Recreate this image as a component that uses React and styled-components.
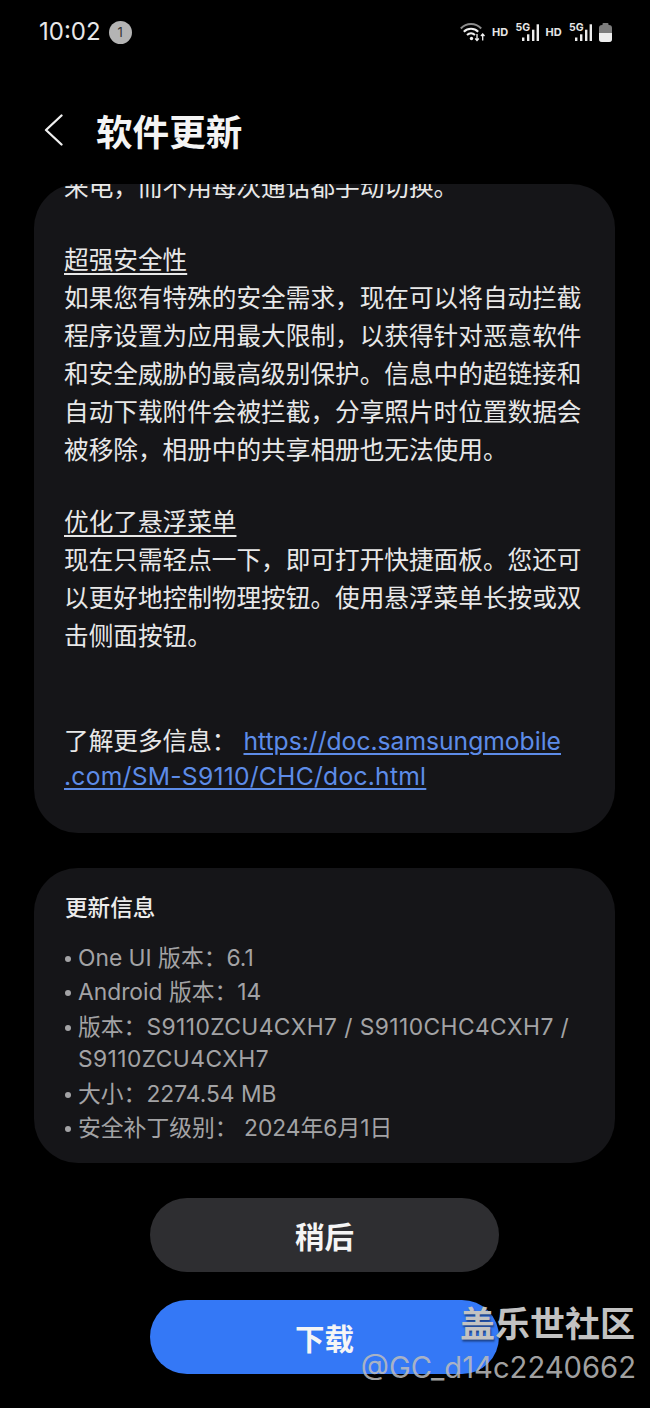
import React from 'react'
import styled, { createGlobalStyle } from 'styled-components'

const GlobalStyle = createGlobalStyle`
  html, body {
    margin: 0;
    padding: 0;
    background: #000;
  }
  * {
    box-sizing: border-box;
  }
`

const FONT = `Inter, "Noto Sans CJK SC", sans-serif`

const Screen = styled.div`
  position: relative;
  width: 650px;
  height: 1408px;
  overflow: hidden;
  background: #000;
  color: #f2f2f2;
  font-family: ${FONT};
  display: flex;
  flex-direction: column;
`

const StatusBar = styled.div`
  height: 64px;
  padding: 0 38px 0 39px;
  display: flex;
  align-items: center;
  justify-content: space-between;
`

const StatusLeft = styled.div`
  display: flex;
  align-items: center;
  gap: 8px;
`

const Clock = styled.span`
  font-size: 24px;
  line-height: 1;
  color: #e8e8e8;
`

const Badge = styled.span`
  width: 23px;
  height: 23px;
  border-radius: 50%;
  background: #b4b4b4;
  color: #333;
  font-size: 13px;
  display: flex;
  align-items: center;
  justify-content: center;
`

const StatusRight = styled.div`
  display: flex;
  align-items: center;
  color: #e6e6e6;
`

const Hd = styled.span`
  width: 15px;
  font-size: 11px;
  font-weight: 700;
  white-space: nowrap;
  margin: 0 8.5px 0 7px;
`

const Network = styled.span`
  position: relative;
  width: 23px;
  height: 22px;
  display: block;
`

const FiveG = styled.span`
  position: absolute;
  left: 0;
  top: 0;
  font-size: 10.5px;
  font-weight: 700;
`

const Bars = styled.svg`
  position: absolute;
  right: 0;
  bottom: 2px;
`

const Battery = styled.svg`
  margin-left: 7px;
`

const Header = styled.div`
  height: 120px;
  padding: 17px 0 0 44px;
  display: flex;
  align-items: center;
`

const BackGlyph = styled.svg`
  margin-bottom: 6px;
`

const Title = styled.h1`
  margin: 0 0 0 32px;
  font-size: 36.6px;
  line-height: 48px;
  font-weight: 700;
  color: #f4f4f4;
`

const Content = styled.div`
  padding: 0 35px 0 34px;
  display: flex;
  flex-direction: column;
  gap: 35px;
`

const Card = styled.section`
  background: #151518;
  border-radius: 44px;
  overflow: hidden;
`

const NotesCard = styled(Card)`
  height: 649px;
  padding: 0 31px;
`

const NotesText = styled.div`
  margin-top: -16px;
  margin-left: -1px;
  font-size: 24.65px;
  line-height: 38px;
  color: #e8e8e8;
`

const Line = styled.div`
  white-space: nowrap;
`

const Heading = styled(Line)`
  text-decoration: underline;
  text-underline-offset: 4px;
  text-decoration-thickness: 1.5px;
  margin-top: ${(p) => p.$top}px;
`

const MoreInfo = styled.div`
  margin-top: 69px;
  line-height: 35px;
`

const Link = styled.span`
  margin-left: 7px;
  color: #5d8ce8;
  text-decoration: underline;
  text-underline-offset: 3px;
  text-decoration-thickness: 1.5px;
`

const LinkEnd = styled(Link)`
  margin-left: 0;
  letter-spacing: 0.25px;
`

const InfoCard = styled(Card)`
  height: 295px;
  padding: 23px 31px 0;
`

const InfoTitle = styled.h2`
  margin: 0 0 16px;
  font-size: 22.6px;
  line-height: 34px;
  font-weight: 500;
  color: #ececec;
`

const InfoList = styled.ul`
  margin: 0;
  padding: 0;
  list-style: none;
  font-size: 22.8px;
  line-height: 34.4px;
  color: #a3a3a5;
`

const InfoItem = styled.li`
  position: relative;
  padding-left: 13px;
  white-space: nowrap;

  &::before {
    content: '';
    position: absolute;
    left: 0;
    top: 15px;
    width: 6px;
    height: 6px;
    border-radius: 50%;
    background: #a3a3a5;
  }
`

const BuildCode = styled.span`
  letter-spacing: 0.42px;
`

const BuildCodeRow = styled.div`
  margin-top: -2px;
  letter-spacing: 0.42px;
`

const Buttons = styled.div`
  margin-top: 35px;
  display: flex;
  flex-direction: column;
  align-items: center;
  gap: 28px;
  padding-right: 1px;
`

const ActionButton = styled.button`
  width: 349px;
  height: 74px;
  border: 0;
  border-radius: 37px;
  background: ${(p) => (p.$primary ? '#3478f6' : '#2e2e31')};
  color: #f5f5f5;
  font-family: ${FONT};
  font-size: 29.5px;
  font-weight: 700;
`

const Watermark = styled.div`
  position: absolute;
  right: 14px;
  bottom: 20px;
  display: flex;
  flex-direction: column;
  align-items: flex-end;
`

const WatermarkName = styled.div`
  margin-right: 1px;
  font-size: 35px;
  line-height: 48px;
  font-weight: 700;
  color: #c2c2c2;
  text-shadow: 1px 2px 2px rgba(0, 0, 0, 0.45);
`

const WatermarkUser = styled.div`
  font-size: 29.2px;
  line-height: 40px;
  color: #bdbdbd;
  opacity: 0.85;
`

function WifiIcon() {
  return (
    <svg width="25" height="20" viewBox="0 0 25 20" fill="none">
      <path d="M0.8 6.5C6.500 0.500 15.500 0.500 21.200 6.500" stroke="#8c8c8c" strokeWidth="2" />
      <path d="M3.800 9.800C7.800 5.800 14.200 5.800 18.200 9.800" stroke="#f0f0f0" strokeWidth="2" />
      <path d="M7 13C9.300 10.800 12.700 10.800 15 13" stroke="#f0f0f0" strokeWidth="2" />
      <circle cx="11.500" cy="16.500" r="1.700" fill="#f0f0f0" />
      <path d="M17 12V18.500M15.200 16.500l1.800 2 1.800-2" stroke="#f0f0f0" strokeWidth="1.300" />
      <path d="M22.700 18.500V12M20.900 14l1.800-2 1.800 2" stroke="#f0f0f0" strokeWidth="1.300" />
    </svg>
  )
}

function SignalBars() {
  return (
    <Bars width="17" height="17" viewBox="0 0 17 17" fill="#ececec">
      <rect x="0" y="13.500" width="2.400" height="3.500" />
      <rect x="5" y="10.300" width="2.400" height="6.700" />
      <rect x="10" y="5.700" width="2.400" height="11.300" />
      <rect x="14.600" y="0.300" width="2.400" height="16.700" />
    </Bars>
  )
}

function BatteryIcon() {
  return (
    <Battery width="13" height="19" viewBox="0 0 13 19">
      <rect x="3.500" y="0" width="6" height="3" rx="1" fill="#7d7d7d" />
      <rect x="0" y="2" width="13" height="17" rx="3" fill="#7d7d7d" />
      <path d="M0 10H13V16a3 3 0 0 1-3 3H3a3 3 0 0 1-3-3Z" fill="#ededed" />
    </Battery>
  )
}

function BackIcon() {
  return (
    <BackGlyph width="20" height="32" viewBox="0 0 20 32" fill="none">
      <path d="M17.500 1.500L2 16l15.500 14.500" stroke="#f0f0f0" strokeWidth="2.300" strokeLinecap="round" strokeLinejoin="round" />
    </BackGlyph>
  )
}

function NetworkSignal() {
  return (
    <Network>
      <FiveG>5G</FiveG>
      <SignalBars />
    </Network>
  )
}

export default function App() {
  return (
    <Screen>
      <GlobalStyle />
      <StatusBar>
        <StatusLeft>
          <Clock>10:02</Clock>
          <Badge>1</Badge>
        </StatusLeft>
        <StatusRight>
          <WifiIcon />
          <Hd>HD</Hd>
          <NetworkSignal />
          <Hd>HD</Hd>
          <NetworkSignal />
          <BatteryIcon />
        </StatusRight>
      </StatusBar>
      <Header>
        <BackIcon />
        <Title>软件更新</Title>
      </Header>
      <Content>
        <NotesCard>
          <NotesText>
            <Line>来电，而不用每次通话都手动切换。</Line>
            <Heading $top={35}>超强安全性</Heading>
            <Line>如果您有特殊的安全需求，现在可以将自动拦截</Line>
            <Line>程序设置为应用最大限制，以获得针对恶意软件</Line>
            <Line>和安全威胁的最高级别保护。信息中的超链接和</Line>
            <Line>自动下载附件会被拦截，分享照片时位置数据会</Line>
            <Line>被移除，相册中的共享相册也无法使用。</Line>
            <Heading $top={34}>优化了悬浮菜单</Heading>
            <Line>现在只需轻点一下，即可打开快捷面板。您还可</Line>
            <Line>以更好地控制物理按钮。使用悬浮菜单长按或双</Line>
            <Line>击侧面按钮。</Line>
            <MoreInfo>
              <Line>了解更多信息：<Link>https://doc.samsungmobile</Link></Line>
              <Line><LinkEnd>.com/SM-S9110/CHC/doc.html</LinkEnd></Line>
            </MoreInfo>
          </NotesText>
        </NotesCard>
        <InfoCard>
          <InfoTitle>更新信息</InfoTitle>
          <InfoList>
            <InfoItem>One UI 版本：6.1</InfoItem>
            <InfoItem>Android 版本：14</InfoItem>
            <InfoItem>
              版本：<BuildCode>S9110ZCU4CXH7 / S9110CHC4CXH7 /</BuildCode>
              <BuildCodeRow>S9110ZCU4CXH7</BuildCodeRow>
            </InfoItem>
            <InfoItem>大小：2274.54 MB</InfoItem>
            <InfoItem>安全补丁级别： 2024年6月1日</InfoItem>
          </InfoList>
        </InfoCard>
      </Content>
      <Buttons>
        <ActionButton>稍后</ActionButton>
        <ActionButton $primary>下载</ActionButton>
      </Buttons>
      <Watermark>
        <WatermarkName>盖乐世社区</WatermarkName>
        <WatermarkUser>@GC_d14c2240662</WatermarkUser>
      </Watermark>
    </Screen>
  )
}
